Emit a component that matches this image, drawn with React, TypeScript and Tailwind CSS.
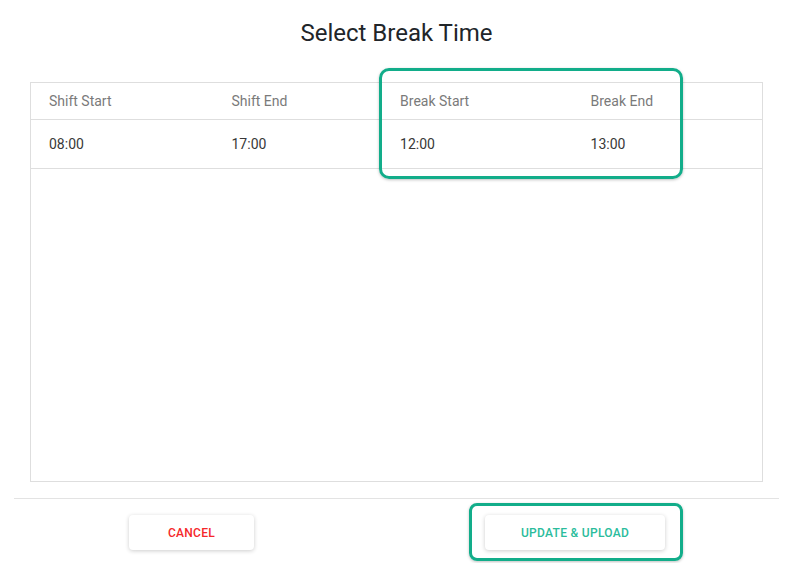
import React from "react";

const cols = [
  { label: "Shift Start", value: "08:00", w: "w-[183px]" },
  { label: "Shift End", value: "17:00", w: "w-[169px]" },
  { label: "Break Start", value: "12:00", w: "w-[191px]" },
  { label: "Break End", value: "13:00", w: "w-[190px]" },
];

export default function App() {
  return (
    <div
      className="relative h-[563px] w-[793px] overflow-hidden bg-white"
      style={{ fontFamily: "Roboto, 'Liberation Sans', sans-serif" }}
    >
      <div className="flex h-[64px] items-center justify-center pt-[1px]">
        <h1 className="text-[24px] font-normal leading-none text-[#212529]">
          Select Break Time
        </h1>
      </div>

      <div className="mx-[30px] mt-[18px] h-[400px] border border-[#dedede]">
        <div className="flex h-[37px] items-center border-b border-[#dedede]">
          {cols.map((c) => (
            <div key={c.label} className={`${c.w} pl-[18px] text-[14px] text-[#7a7a7a]`}>
              {c.label}
            </div>
          ))}
        </div>
        <div className="flex h-[49px] items-center border-b border-[#dedede]">
          {cols.map((c) => (
            <div key={c.label} className={`${c.w} pl-[18px] text-[14px] text-[#383838]`}>
              {c.value}
            </div>
          ))}
        </div>
      </div>

      <div className="mx-[14px] mt-[16px] border-t border-[#e3e3e3]" />

      <div className="mt-[16px] flex">
        <button className="ml-[129px] h-[35px] w-[125px] rounded-[4px] bg-white text-[12px] font-medium tracking-[0.3px] text-[#f5282a] shadow-[0_1px_4px_rgba(0,0,0,0.2)]">
          CANCEL
        </button>
        <button className="ml-[231px] h-[35px] w-[180px] rounded-[4px] bg-white text-[12px] font-medium tracking-[0.3px] text-[#2bbc9c] shadow-[0_1px_4px_rgba(0,0,0,0.2)]">
          UPDATE &amp; UPLOAD
        </button>
      </div>

      <div className="pointer-events-none absolute left-[379px] top-[68px] h-[111px] w-[304px] rounded-[10px] border-[3px] border-[#12ad8a] shadow-[0_1px_3px_rgba(0,0,0,0.25)]" />
      <div className="pointer-events-none absolute left-[469px] top-[503px] h-[58px] w-[214px] rounded-[8px] border-[3px] border-[#12ad8a] shadow-[0_1px_3px_rgba(0,0,0,0.25)]" />
    </div>
  );
}
